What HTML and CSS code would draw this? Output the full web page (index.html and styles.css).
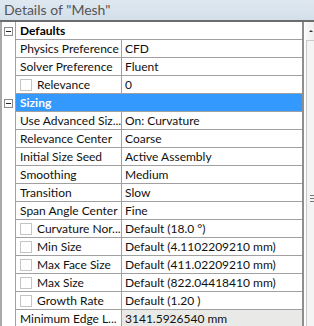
FILE: index.html
```html
<!DOCTYPE html>
<html lang="en">
<head>
    <meta charset="UTF-8">
    <title>Details of "Mesh"</title>
    <link rel="stylesheet" href="styles.css">
</head>
<body>
    <div class="panel">
        <div class="title">Details of "Mesh"</div>

        <div class="body">
            <div class="grid">
                <div class="row group">
                    <div class="gutter"><span class="toggle"></span></div>
                    <div class="group-name">Defaults</div>
                </div>
                <div class="row">
                    <div class="gutter"></div>
                    <div class="name">Physics Preference</div>
                    <div class="value">CFD</div>
                </div>
                <div class="row">
                    <div class="gutter"></div>
                    <div class="name">Solver Preference</div>
                    <div class="value">Fluent</div>
                </div>
                <div class="row">
                    <div class="gutter"></div>
                    <div class="name"><span class="check"></span>Relevance</div>
                    <div class="value">0</div>
                </div>

                <div class="row group selected">
                    <div class="gutter"><span class="toggle"></span></div>
                    <div class="group-name">Sizing</div>
                </div>
                <div class="row">
                    <div class="gutter"></div>
                    <div class="name">Use Advanced Siz...</div>
                    <div class="value">On: Curvature</div>
                </div>
                <div class="row">
                    <div class="gutter"></div>
                    <div class="name">Relevance Center</div>
                    <div class="value">Coarse</div>
                </div>
                <div class="row">
                    <div class="gutter"></div>
                    <div class="name">Initial Size Seed</div>
                    <div class="value">Active Assembly</div>
                </div>
                <div class="row">
                    <div class="gutter"></div>
                    <div class="name">Smoothing</div>
                    <div class="value">Medium</div>
                </div>
                <div class="row">
                    <div class="gutter"></div>
                    <div class="name">Transition</div>
                    <div class="value">Slow</div>
                </div>
                <div class="row">
                    <div class="gutter"></div>
                    <div class="name">Span Angle Center</div>
                    <div class="value">Fine</div>
                </div>
                <div class="row">
                    <div class="gutter"></div>
                    <div class="name"><span class="check"></span>Curvature Nor...</div>
                    <div class="value">Default (18.0 °)</div>
                </div>
                <div class="row">
                    <div class="gutter"></div>
                    <div class="name"><span class="check"></span>Min Size</div>
                    <div class="value">Default (4.1102209210 mm)</div>
                </div>
                <div class="row">
                    <div class="gutter"></div>
                    <div class="name"><span class="check"></span>Max Face Size</div>
                    <div class="value">Default (411.02209210 mm)</div>
                </div>
                <div class="row">
                    <div class="gutter"></div>
                    <div class="name"><span class="check"></span>Max Size</div>
                    <div class="value">Default (822.04418410 mm)</div>
                </div>
                <div class="row">
                    <div class="gutter"></div>
                    <div class="name"><span class="check"></span>Growth Rate</div>
                    <div class="value">Default (1.20 )</div>
                </div>
                <div class="row">
                    <div class="gutter"></div>
                    <div class="name">Minimum Edge L...</div>
                    <div class="value readonly">3141.5926540 mm</div>
                </div>
            </div>

            <div class="scrollbar">
                <div class="arrow"></div>
                <div class="thumb"><span class="grip"></span></div>
            </div>
        </div>
    </div>
</body>
</html>
```

FILE: styles.css
```css
body {
    margin: 0;
    font-family: Lato, "Liberation Sans", sans-serif;
    font-size: 12px;
    color: #111;
    background: #fff;
}
.panel {
    width: 314px;
    height: 326px;
    overflow: hidden;
}
.title {
    height: 20px;
    line-height: 20px;
    padding-left: 4px;
    font-size: 14px;
    color: #555;
    background: linear-gradient(#dfe8f1, #d3dfea);
    border-bottom: 2px solid #6d6d6d;
}
.body {
    display: flex;
    border-left: 2px solid #a9a9a9;
}
.grid {
    width: 301px;
    border-right: 2px solid #8e8e8e;
}
.row {
    display: flex;
    height: 18px;
    line-height: 17px;
    white-space: nowrap;
}
.gutter {
    width: 13px;
    flex: none;
    border-right: 1px solid #a0a0a0;
    position: relative;
}
.name,
.value,
.group-name {
    border-bottom: 1px solid #a0a0a0;
    overflow: hidden;
}
.name {
    width: 101px;
    padding-left: 4px;
    border-right: 1px solid #a0a0a0;
    display: flex;
    align-items: center;
}
.value {
    flex: 1;
    padding-left: 3px;
}
.value.readonly {
    background: #e9e9e7;
}
.group-name {
    flex: 1;
    padding-left: 4px;
    font-weight: bold;
    color: #000;
}
.selected .group-name {
    background: #3399ff;
    color: #fff;
}
.toggle {
    position: absolute;
    left: 2px;
    top: 5px;
    width: 7px;
    height: 7px;
    border: 1px solid #8a8a8a;
    background: #fff;
}
.toggle::after {
    content: "";
    position: absolute;
    left: 1px;
    top: 3px;
    width: 5px;
    height: 1px;
    background: #222;
}
.check {
    width: 10px;
    height: 10px;
    border: 1px solid #c4c4c4;
    background: #fff;
    margin-right: 5px;
    flex: none;
}
.scrollbar {
    width: 9px;
    height: 305px;
    background: linear-gradient(90deg, #fafafa, #eeeeee);
    border-left: 1px solid #fff;
}
.arrow {
    height: 12px;
    position: relative;
}
.arrow::after {
    content: "";
    position: absolute;
    left: 4px;
    top: 8px;
    border-left: 2px solid transparent;
    border-right: 2px solid transparent;
    border-bottom: 2px solid #333;
}
.thumb {
    margin: 6px 0 0 1px;
    height: 320px;
    border: 1px solid #c9c9c9;
    border-right: none;
    background: #f4f4f4;
    position: relative;
}
.grip {
    position: absolute;
    left: 3px;
    top: 154px;
    width: 5px;
    height: 5px;
    border-top: 1px solid #777;
    border-bottom: 1px solid #777;
}
.grip::after {
    content: "";
    position: absolute;
    left: 0;
    top: 2px;
    width: 5px;
    height: 1px;
    background: #777;
}
```
